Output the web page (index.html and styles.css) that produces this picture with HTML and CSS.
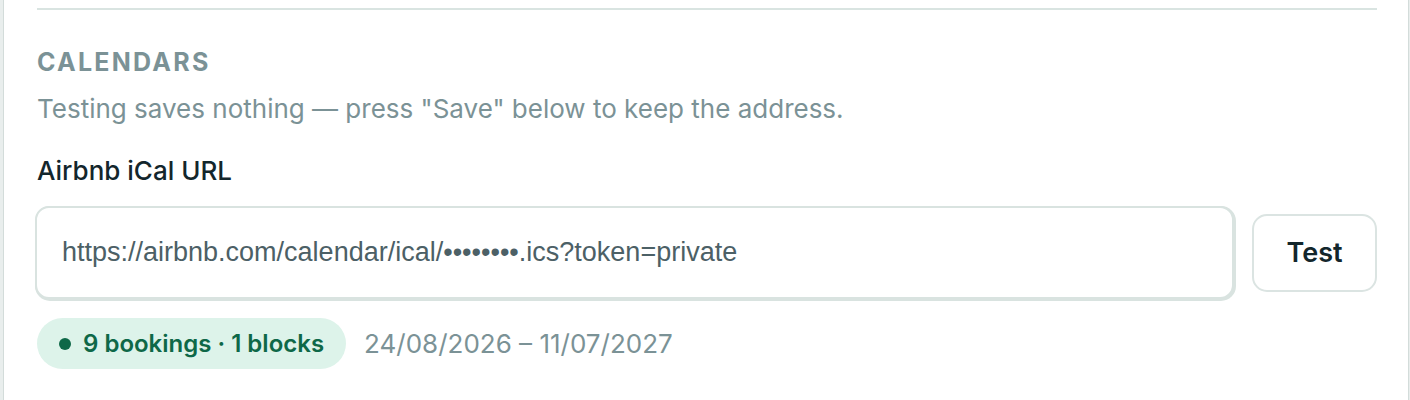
FILE: index.html
```html
<!DOCTYPE html>
<html lang="en">
<head>
<meta charset="utf-8">
<title>Calendars</title>
<link rel="stylesheet" href="styles.css">
</head>
<body>
<div class="card">
  <div class="divider"></div>
  <section class="section">
    <h2 class="section-title">Calendars</h2>
    <p class="section-desc">Testing saves nothing — press "Save" below to keep the address.</p>
    <label class="field-label" for="ical">Airbnb iCal URL</label>
    <div class="field-row">
      <input id="ical" class="field-input" type="text" value="https://airbnb.com/calendar/ical/••••••••.ics?token=private">
      <button class="btn-test" type="button">Test</button>
    </div>
    <div class="status-row">
      <span class="status-pill"><span class="status-dot"></span>9 bookings · 1 blocks</span>
      <span class="status-range">24/08/2026 – 11/07/2027</span>
    </div>
  </section>
</div>
</body>
</html>
```

FILE: styles.css
```css
html, body {
  margin: 0;
  padding: 0;
}
body {
  background: #e9eeed;
  font-family: Inter, "Noto Sans", sans-serif;
  height: 400px;
  overflow: hidden;
}
.card {
  margin-left: 3px;
  width: 1406px;
  box-sizing: border-box;
  height: 400px;
  background: #ffffff;
  border-left: 1px solid #d3dcda;
  border-right: 1px solid #d3dcda;
  padding: 8px 31px 0 33px;
}
.divider {
  height: 2px;
  background: #d9e4e1;
}
.section {
  display: flex;
  flex-direction: column;
  align-items: flex-start;
  padding-top: 37px;
}
.section-title {
  margin: 0;
  font-size: 25px;
  line-height: 30px;
  font-weight: 700;
  letter-spacing: 0.09em;
  text-transform: uppercase;
  color: #7b9296;
}
.section-desc {
  margin: 16px 0 0;
  font-size: 26px;
  line-height: 32px;
  color: #7b9296;
}
.field-label {
  margin-top: 30px;
  font-size: 26px;
  line-height: 32px;
  font-weight: 500;
  color: #13262c;
}
.field-row {
  align-self: stretch;
  display: flex;
  align-items: center;
  gap: 18px;
  margin-top: 19px;
}
.field-input {
  flex: 1;
  height: 93px;
  box-sizing: border-box;
  margin: 0 0 0 -2px;
  padding: 0 25px;
  border: 2px solid #d9e3e0;
  border-radius: 14px;
  box-shadow: 1px 1px 0 1px #d9e3e0;
  font-family: "Liberation Sans", Arial, sans-serif;
  font-size: 27px;
  color: #4c6066;
  background: #ffffff;
  outline: none;
}
.btn-test {
  width: 125px;
  height: 78px;
  box-sizing: border-box;
  border: 2px solid #dbe4e2;
  border-radius: 15px;
  background: #ffffff;
  font-family: Inter, "Noto Sans", sans-serif;
  font-size: 27px;
  font-weight: 600;
  color: #13262c;
}
.status-row {
  display: flex;
  align-items: center;
  gap: 18px;
  margin-top: 19px;
}
.status-pill {
  display: inline-flex;
  align-items: center;
  gap: 12px;
  height: 51px;
  padding: 0 22px;
  border-radius: 26px;
  background: #ddf3ea;
  color: #0e6848;
  font-size: 24px;
  font-weight: 600;
}
.status-dot {
  width: 12px;
  height: 12px;
  border-radius: 50%;
  background: #0e6848;
}
.status-range {
  font-size: 26px;
  color: #7b9296;
}
```
